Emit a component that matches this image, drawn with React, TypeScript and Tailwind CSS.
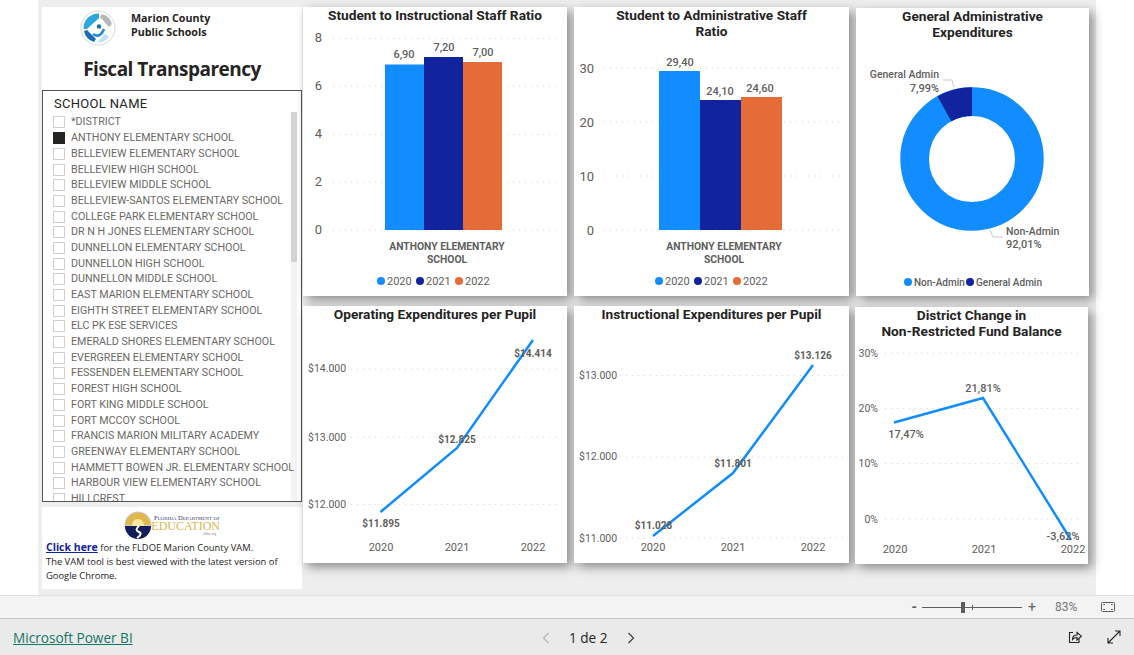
import React from "react";

const ff = { fontFamily: "Roboto, 'Liberation Sans', sans-serif" };
const schools = [
  "*DISTRICT","ANTHONY ELEMENTARY SCHOOL","BELLEVIEW ELEMENTARY SCHOOL","BELLEVIEW HIGH SCHOOL","BELLEVIEW MIDDLE SCHOOL","BELLEVIEW-SANTOS ELEMENTARY SCHOOL","COLLEGE PARK ELEMENTARY SCHOOL","DR N H JONES ELEMENTARY SCHOOL","DUNNELLON ELEMENTARY SCHOOL","DUNNELLON HIGH SCHOOL","DUNNELLON MIDDLE SCHOOL","EAST MARION ELEMENTARY SCHOOL","EIGHTH STREET ELEMENTARY SCHOOL","ELC PK ESE SERVICES","EMERALD SHORES ELEMENTARY SCHOOL","EVERGREEN ELEMENTARY SCHOOL","FESSENDEN ELEMENTARY SCHOOL","FOREST HIGH SCHOOL","FORT KING MIDDLE SCHOOL","FORT MCCOY SCHOOL","FRANCIS MARION MILITARY ACADEMY","GREENWAY ELEMENTARY SCHOOL","HAMMETT BOWEN JR. ELEMENTARY SCHOOL","HARBOUR VIEW ELEMENTARY SCHOOL","HILLCREST",
];
const B = "#118dff", N = "#12239e", O = "#e66c37";
const T = "#605e5c";

function Grid({ x1, x2, ys }: { x1: number; x2: number; ys: number[] }) {
  return <>{ys.map((y) => <line key={y} x1={x1} x2={x2} y1={y} y2={y} stroke="#d4d4d4" strokeWidth="1" strokeDasharray="1 5" />)}</>;
}
function Lbl({ x, y, children, anchor = "middle", bold = false, w = 400, size = 11, fill = T }: any) {
  return <text x={x} y={y} textAnchor={anchor} fontSize={size} fontWeight={bold ? 700 : w} fill={fill} fontFamily="Roboto, sans-serif">{children}</text>;
}
function Legend({ x, y, items }: { x: number; y: number; items: [number, string, string][] }) {
  return <>{items.map(([lx, c, t]) => <g key={t}><circle cx={x + lx} cy={y} r="4" fill={c} /><Lbl x={x + lx + 6} y={y + 4} anchor="start">{t}</Lbl></g>)}</>;
}

function Card({ title, children }: { title: React.ReactNode; children: React.ReactNode }) {
  return (
    <div className="relative bg-white shadow-[4px_4px_10px_rgba(0,0,0,0.42)]">
      <div className="absolute inset-x-0 top-0 text-center text-[13.7px] leading-[16px] font-bold text-[#252423]" style={ff}>{title}</div>
      {children}
    </div>
  );
}

function Chart({ w, h, children }: { w: number; h: number; children: React.ReactNode }) {
  return <svg width={w} height={h} viewBox={`0 0 ${w} ${h}`} className="block">{children}</svg>;
}

function Check({ on }: { on: boolean }) {
  return <span className={`w-[12px] h-[12px] shrink-0 border ${on ? "bg-[#252423] border-[#252423]" : "bg-white border-[#cfcfd4]"}`} />;
}

function MarionLogo() {
  return (
    <svg width="36" height="36" viewBox="0 0 36 36">
      <circle cx="18" cy="18" r="17" fill="#fff" stroke="#d5d9dc" strokeWidth="1" />
      <path d="M19 3.5 A14.5 14.5 0 0 0 3.6 19 L7 19 L19 8 Z" fill="#2aa7df" />
      <path d="M22 4 A14.5 14.5 0 0 1 32 14 L29 17 L20 7 Z" fill="#b5b7b9" />
      <path d="M4 21 A14.5 14.5 0 0 0 14 32 L16 29 L7 20 Z" fill="#1a6db3" />
      <path d="M17 32.5 A14.5 14.5 0 0 0 29 27 L25 24 L20 29 Z" fill="#bfe2f3" />
      <circle cx="19" cy="16.5" r="2.2" fill="#1a6db3" />
      <path d="M13 24 Q20 29 24 19" fill="none" stroke="#2a8ccb" strokeWidth="2.6" />
    </svg>
  );
}

function FldoeLogo() {
  const serif = { fontFamily: "'Liberation Serif', serif" };
  return (
    <div className="flex items-center gap-[1px] h-[28px]">
      <svg width="28" height="28" viewBox="0 0 28 28">
        <circle cx="14" cy="14" r="13.5" fill="#c9cbd6" />
        <path d="M1.5 14 A12.5 12.5 0 0 1 26.5 14 Z" fill="#e0b74a" />
        <circle cx="14" cy="14" r="6" fill="#f8e7a0" />
        <path d="M1 15 H27 A13 13 0 0 1 1 15 Z" fill="#141d5c" />
        <path d="M15 15 Q10 19 15 21 Q19 23 13 27" fill="none" stroke="#fff" strokeWidth="2" />
      </svg>
      <div className="flex flex-col items-end leading-none w-[67px]">
        <span className="text-[6.5px] leading-[7px] text-[#39406f] [font-variant:small-caps] whitespace-nowrap" style={serif}>Florida Department of</span>
        <span className="text-[12px] leading-[11px] text-[#d9b44f] whitespace-nowrap" style={serif}>EDUCATION</span>
        <span className="text-[3.5px] leading-[5px] text-[#777] whitespace-nowrap mr-[4px]" style={serif}>fldoe.org</span>
      </div>
    </div>
  );
}

export default function App() {
  return (
    <div className="w-[1134px] h-[655px] overflow-hidden bg-white flex flex-col" style={ff}>
      <div className="h-[595px] shrink-0 ml-[38px] w-[1058px] bg-[#eeeeee] pl-[4px] pt-[7px] grid grid-cols-[260px_265px_282px_240px] grid-rows-[289px_257px] gap-y-[10px]">
        <div className="row-span-2 flex flex-col h-[582px]">
          <div className="h-[83px] bg-white shrink-0 flex flex-col">
            <div className="flex items-start pl-[38px] pt-[3px] h-[43px]">
              <MarionLogo />
              <div className="ml-[15px] mt-[1px] text-[10.7px] leading-[14px] font-bold text-[#252423]" style={{ fontFamily: "'Open Sans', sans-serif" }}>Marion County<br />Public Schools</div>
            </div>
            <div className="text-center text-[19px] leading-[28px] font-bold text-[#252423] mt-[5px]" style={{ fontFamily: "'Open Sans', sans-serif", letterSpacing: "-0.5px" }}>Fiscal Transparency</div>
          </div>
          <div className="relative h-[412px] bg-white border border-[#555] shrink-0 overflow-hidden pl-[10px]">
            <div className="absolute right-[4px] top-[21px] w-[6px] h-[150px] bg-[#d4d4d4]" />
            <div className="absolute right-[4px] top-[171px] w-[6px] h-[239px] bg-[#f4f4f4]" />
            <div className="relative text-[13px] leading-[16px] mt-[5px] ml-[1px] text-[#252423] tracking-[0.3px]">SCHOOL NAME</div>
            <div className="relative mt-[2.6px] flex flex-col">
              {schools.map((s, i) => (
                <div key={s} className="flex items-center gap-[6px] h-[15.7px] shrink-0">
                  <Check on={i === 1} />
                  <span className="text-[10.7px] leading-[14px] text-[#6b6966] whitespace-nowrap">{s}</span>
                </div>
              ))}
            </div>
          </div>
          <div className="h-[82px] mt-[5px] bg-white px-[4px] shrink-0 text-[9.4px] leading-[14px] text-[#252423]" style={{ fontFamily: "'Open Sans', sans-serif" }}>
            <div className="flex pl-[78px] pt-[4px] pb-[1px]"><FldoeLogo /></div>
            <div><a className="text-[10.5px] font-bold text-[#12239e] underline">Click here</a> for the FLDOE Marion County VAM.</div>
            <div>The VAM tool is best viewed with the latest version of</div>
            <div>Google Chrome.</div>
          </div>
        </div>

        {/* row 1 */}
        <div className="ml-[1px] grid"><Card title="Student to Instructional Staff Ratio">
          <Chart w={264} h={289}>
            <Grid x1={30} x2={258} ys={[31.5, 79, 127.5, 175, 223]} />
            {[["8",35],["6",83],["4",131],["2",179],["0",227]].map(([t, y]) => <Lbl key={t as string} x={15.5} y={y} size={13}>{t}</Lbl>)}
            <rect x={82} y={57.5} width={39} height={165.5} fill={B} />
            <rect x={121} y={50} width={39} height={173} fill={N} />
            <rect x={160} y={55} width={39} height={168} fill={O} />
            <Lbl x={101} y={51} w={500}>6,90</Lbl><Lbl x={141} y={44} w={500}>7,20</Lbl><Lbl x={180} y={49} w={500}>7,00</Lbl>
            <Lbl x={144} y={243} bold size={10.3}>ANTHONY ELEMENTARY</Lbl><Lbl x={144} y={256} bold size={10.3}>SCHOOL</Lbl>
            <Legend x={78} y={274} items={[[0, B, "2020"],[39, N, "2021"],[78, O, "2022"]]} />
          </Chart>
        </Card></div>
        <div className="ml-[7px] grid"><Card title={<>Student to Administrative Staff<br />Ratio</>}>
          <Chart w={275} h={289}>
            <Grid x1={30} x2={268} ys={[61, 115, 169, 223]} />
            {[["30",65.5],["20",119.5],["10",173.5],["0",227.5]].map(([t, y]) => <Lbl key={t as string} x={20} y={y} size={13} anchor="end">{t}</Lbl>)}
            <rect x={85} y={64} width={41} height={159} fill={B} />
            <rect x={126} y={93} width={41} height={130} fill={N} />
            <rect x={167} y={90} width={41} height={133} fill={O} />
            <Lbl x={106} y={59} w={500}>29,40</Lbl><Lbl x={146} y={88} w={500}>24,10</Lbl><Lbl x={186} y={85} w={500}>24,60</Lbl>
            <Lbl x={150} y={243} bold size={10.3}>ANTHONY ELEMENTARY</Lbl><Lbl x={150} y={256} bold size={10.3}>SCHOOL</Lbl>
            <Legend x={85} y={274} items={[[0, B, "2020"],[39, N, "2021"],[78, O, "2022"]]} />
          </Chart>
        </Card></div>
        <div className="ml-[7px] grid grid-rows-[288px] mt-[1px]"><Card title={<>General Administrative<br />Expenditures</>}>
          <Chart w={233} h={288}>
            <circle cx={116} cy={151} r={57.35} fill="none" stroke={B} strokeWidth={28.7} />
            <path d="M116 79.3 L116 108 A43 43 0 0 0 95.3 113.3 L81.5 88.2 A71.7 71.7 0 0 1 116 79.3 Z" fill={N} />
            <path d="M87 72 L96 72 L98 79" stroke="#c8c8c8" fill="none" />
            <path d="M134 222 L137 229 L147 229" stroke="#c8c8c8" fill="none" />
            <Lbl x={83} y={70} anchor="end" w={500} size={10.5}>General Admin</Lbl><Lbl x={83} y={84} anchor="end" w={500}>7,99%</Lbl>
            <Lbl x={150} y={227} anchor="start" w={500} size={10.5}>Non-Admin</Lbl>
            <Lbl x={150} y={240} anchor="start" w={500}>92,01%</Lbl>
            <circle cx={52} cy={274} r="4" fill={B} /><Lbl x={58} y={278} size={10} anchor="start" w={500}>Non-Admin</Lbl>
            <circle cx={114} cy={274} r="4" fill={N} /><Lbl x={120} y={278} size={10} anchor="start" w={500}>General Admin</Lbl>
          </Chart>
        </Card></div>

        {/* row 2 */}
        <div className="ml-[1px] grid"><Card title="Operating Expenditures per Pupil">
          <Chart w={264} h={257}>
            <Grid x1={48} x2={258} ys={[63, 131, 198.5]} />
            <Lbl x={5} y={66} size={10.5} anchor="start">$14.000</Lbl><Lbl x={5} y={135} size={10.5} anchor="start">$13.000</Lbl><Lbl x={5} y={202} size={10.5} anchor="start">$12.000</Lbl>
            <polyline points="77.5,206 154,142 230,34" fill="none" stroke={B} strokeWidth="2.5" />
            <Lbl x={78} y={221} bold size={10}>$11.895</Lbl><Lbl x={154} y={137} bold size={10}>$12.825</Lbl><Lbl x={230} y={51} bold size={10}>$14.414</Lbl>
            <Lbl x={78} y={245}>2020</Lbl><Lbl x={154} y={245}>2021</Lbl><Lbl x={230} y={245}>2022</Lbl>
          </Chart>
        </Card></div>
        <div className="ml-[7px] grid"><Card title="Instructional Expenditures per Pupil">
          <Chart w={275} h={257}>
            <Grid x1={46} x2={270} ys={[69.5, 151, 232]} />
            <Lbl x={5} y={73} size={10.5} anchor="start">$13.000</Lbl><Lbl x={5} y={154} size={10.5} anchor="start">$12.000</Lbl><Lbl x={5} y={236} size={10.5} anchor="start">$11.000</Lbl>
            <polyline points="79,230 159,167 239,59" fill="none" stroke={B} strokeWidth="2.5" />
            <Lbl x={79.5} y={223} bold size={10}>$11.028</Lbl><Lbl x={159} y={161} bold size={10}>$11.801</Lbl><Lbl x={239} y={53} bold size={10}>$13.126</Lbl>
            <Lbl x={79} y={245}>2020</Lbl><Lbl x={159} y={245}>2021</Lbl><Lbl x={239} y={245}>2022</Lbl>
          </Chart>
        </Card></div>
        <div className="ml-[6px] mr-[1px] grid mt-[1px] grid-rows-[257px]"><Card title={<>District Change in<br />Non-Restricted Fund Balance</>}>
          <Chart w={233} h={257}>
            <Grid x1={30} x2={226} ys={[46, 101.5, 156.5, 212]} />
            <Lbl x={23} y={50} size={10.5} anchor="end">30%</Lbl><Lbl x={23} y={105} size={10.5} anchor="end">20%</Lbl><Lbl x={23} y={160} size={10.5} anchor="end">10%</Lbl><Lbl x={23} y={216} size={10.5} anchor="end">0%</Lbl>
            <polyline points="39,115.5 128,91 216,233" fill="none" stroke={B} strokeWidth="2.5" />
            <Lbl x={51} y={131} w={500}>17,47%</Lbl><Lbl x={128} y={85} w={500}>21,81%</Lbl><Lbl x={208} y={233} w={500}>-3,62%</Lbl>
            <Lbl x={40} y={246}>2020</Lbl><Lbl x={129} y={246}>2021</Lbl><Lbl x={218} y={246}>2022</Lbl>
          </Chart>
        </Card></div>
      </div>

      <div className="h-[1px] bg-[#e0e0e0] shrink-0" />
      <div className="h-[23px] bg-[#f3f3f3] border-b border-[#c8c8c8] shrink-0 flex items-center justify-end text-[#605e5c]">
        <span className="text-[14px] font-bold leading-none mr-[5px]">-</span>
        <div className="relative w-[100px] h-[1px] bg-[#605e5c]">
          <div className="absolute left-[39px] -top-[5px] w-[4px] h-[11px] bg-[#605e5c]" />
          <div className="absolute left-[50px] -top-[2px] w-[1px] h-[5px] bg-[#605e5c]" />
        </div>
        <span className="text-[14px] leading-none ml-[6px]">+</span>
        <span className="text-[12px] ml-[19px] w-[26px] text-[#777]">83%</span>
        <svg width="16" height="12" viewBox="0 0 16 12" className="ml-[19px] mr-[18px]" fill="none" stroke="#605e5c">
          <rect x="1.5" y="1.5" width="13" height="9" rx="1" />
          <path d="M3.5 4V3.5H5M11 3.5h1.5V4M3.5 8V8.5H5M11 8.5h1.5V8" />
        </svg>
      </div>
      <div className="flex-1 bg-[#eaeaea] relative flex items-center justify-between pl-[13px] pr-[13px] pt-[3px]">
        <a className="text-[13.6px] text-[#117865] underline" style={{ fontFamily: "'Open Sans', sans-serif" }}>Microsoft Power BI</a>
        <div className="absolute left-[541px] top-0 h-full flex items-center pt-[2px]">
          <svg width="10" height="12" viewBox="0 0 10 12" fill="none" stroke="#b8b8b8" strokeWidth="1.3"><path d="M7.5 1 L2.5 6 L7.5 11" /></svg>
          <span className="text-[13.6px] text-[#252423] ml-[18px]" style={{ fontFamily: "'Open Sans', sans-serif" }}>1 de 2</span>
          <svg width="10" height="12" viewBox="0 0 10 12" fill="none" stroke="#444" strokeWidth="1.3" className="ml-[18px]"><path d="M2.5 1 L7.5 6 L2.5 11" /></svg>
        </div>
        <div className="flex items-center gap-[25px] mb-[3px]">
          <svg width="14" height="14" viewBox="0 0 14 14" fill="none" stroke="#252423" strokeWidth="1.1" className="-ml-[1px]">
            <path d="M5 2.5H1.5V12.5H11V9" /><path d="M4.5 9.5 C4.5 6.5 6.5 5 9 5 V2.5 L13.5 6.2 L9 10 V7.5 C7 7.5 5.5 8 4.5 9.5 Z" />
          </svg>
          <svg width="14" height="14" viewBox="0 0 14 14" fill="none" stroke="#252423" strokeWidth="1.1">
            <path d="M1 13 L13 1 M8 1H13V6 M1 8V13H6" />
          </svg>
        </div>
      </div>
    </div>
  );
}
